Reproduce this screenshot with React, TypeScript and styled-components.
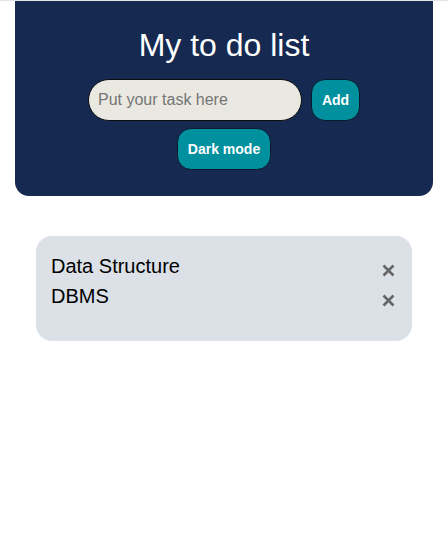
import React, { useState } from "react";
import styled, { createGlobalStyle } from "styled-components";

const Global = createGlobalStyle`
  html, body { margin: 0; padding: 0; background: #ffffff; }
  body {
    font-family: "Liberation Sans", Arial, sans-serif;
    border-top: 1px solid #e4e4e4;
  }
  * { box-sizing: border-box; }
`;

const Page = styled.div`
  display: flex;
  flex-direction: column;
  align-items: center;
`;

const Header = styled.header`
  width: 418px;
  background: #162950;
  border-radius: 0 0 14px 14px;
  padding: 26px 0 26px;
  display: flex;
  flex-direction: column;
  align-items: center;
`;

const Title = styled.h1`
  margin: 0 0 15px;
  font-size: 32px;
  font-weight: 400;
  line-height: 37px;
  color: #ffffff;
`;

const InputRow = styled.div`
  display: flex;
  gap: 9px;
`;

const TaskInput = styled.input`
  width: 214px;
  height: 42px;
  border-radius: 21px;
  border: 1px solid #0c0c0c;
  background: #e9e9e1;
  padding: 0 9px;
  font-family: "Liberation Sans", Arial, sans-serif;
  font-size: 16px;
  color: #222;
  outline: none;
  &::placeholder { color: #757575; }
`;

const Button = styled.button<{ $w: number }>`
  width: ${(p) => p.$w}px;
  height: 42px;
  border-radius: 14px;
  border: 1px solid #0a1a2a;
  background: #00909e;
  color: #ffffff;
  font-family: "Liberation Sans", Arial, sans-serif;
  font-weight: 700;
  font-size: 14px;
  padding: 0;
  cursor: pointer;
`;

const DarkButton = styled(Button)`
  margin-top: 7px;
`;

const Card = styled.ul`
  list-style: none;
  width: 376px;
  margin: 40px 0 0 0;
  padding: 15px 16px 30px 15px;
  background: #dbe1e7;
  border-radius: 16px;
`;

const Item = styled.li`
  display: flex;
  align-items: center;
  justify-content: space-between;
  font-size: 20px;
  line-height: 30px;
  color: #000;
`;

const Remove = styled.button`
  border: none;
  background: none;
  padding: 0;
  width: 16px;
  height: 14px;
  margin-top: 8px;
  display: flex;
  align-items: center;
  justify-content: center;
  cursor: pointer;
`;

const XIcon = () => (
  <svg width="13" height="13" viewBox="0 0 13 13">
    <path d="M1.5 1.5 L11.5 11.5 M11.5 1.5 L1.5 11.5" stroke="#666" strokeWidth="2.6" strokeLinecap="butt" />
  </svg>
);

export default function App() {
  const [tasks] = useState(["Data Structure", "DBMS"]);
  return (
    <Page>
      <Global />
      <Header>
        <Title>My to do list</Title>
        <InputRow>
          <TaskInput placeholder="Put your task here" autoFocus />
          <Button $w={49}>Add</Button>
        </InputRow>
        <DarkButton $w={94}>Dark mode</DarkButton>
      </Header>
      <Card>
        {tasks.map((t) => (
          <Item key={t}>
            {t}
            <Remove aria-label="remove">
              <XIcon />
            </Remove>
          </Item>
        ))}
      </Card>
    </Page>
  );
}
